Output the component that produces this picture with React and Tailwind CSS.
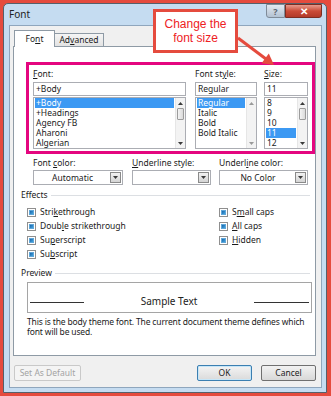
import React from 'react'

const U = ({ children }) => <span className="underline underline-offset-[1px] decoration-[0.5px]">{children}</span>

function Tri({ up, light }) {
  return (
    <svg width="5" height="3" viewBox="0 0 5 3">
      <polygon points={up ? '0,3 5,3 2.5,0' : '0,0 5,0 2.5,3'} fill={light ? '#9a9a9a' : '#3a3a3a'} />
    </svg>
  )
}

function Scroll({ thumb, disabled }) {
  return (
    <div className="w-[10px] flex flex-col bg-[#f3f3f3] border-l border-[#e6e6e6]">
      <div className="h-[10px] flex items-center justify-center">
        <Tri up light={disabled} />
      </div>
      <div className="flex-1">
        {thumb && <div className="h-[12px] mx-[1px] border border-[#9c9c9c] rounded-[1px] bg-gradient-to-r from-[#f4f4f4] to-[#dadada]" />}
      </div>
      <div className="h-[10px] flex items-center justify-center">
        <Tri light={disabled} />
      </div>
    </div>
  )
}

function ListBox({ items, selected, thumb, disabled, w }) {
  return (
    <div className={'flex h-[52px] border border-[#abadb3] bg-white ' + w}>
      <div className="flex-1 px-[1px] overflow-hidden">
        {items.map((it) => (
          <div key={it} className={'h-[10px] leading-[10px] pl-[1px] whitespace-nowrap ' + (it === selected ? 'bg-[#3c99f3] text-white' : '')}>
            {it}
          </div>
        ))}
      </div>
      <Scroll thumb={thumb} disabled={disabled} />
    </div>
  )
}

function Drop({ value, w }) {
  return (
    <div className={'flex h-[15px] border border-[#abadb3] bg-white p-[1px] ' + w}>
      <div className="flex-1 text-center leading-[11px]">{value}</div>
      <div className="w-[11px] border border-[#8a8a8a] bg-gradient-to-b from-[#f2f2f2] to-[#d4d4d4] flex items-center justify-center">
        <Tri />
      </div>
    </div>
  )
}

function Check({ children }) {
  return (
    <div className="h-[14px] flex items-center gap-[4px]">
      <div className="w-[9px] h-[9px] border border-[#8f8f8f] bg-white p-[1px]">
        <div className="w-full h-full border border-[#5ea6d9] bg-gradient-to-br from-[#1c63a8] to-[#43a6e0]" />
      </div>
      <span>{children}</span>
    </div>
  )
}

function Section({ title }) {
  return (
    <div className="h-[12px] flex items-center gap-[3px] pl-[7px] pr-[5px]">
      <span>{title}</span>
      <div className="flex-1 h-px bg-[#dcdfe3]" />
    </div>
  )
}

export default function App() {
  return (
    <div className="relative w-[331px] h-[396px] bg-[#e54b3e] pt-[3px] pl-[3px] pr-[4px] pb-[3px] text-[8.5px] text-[#1b1b1b] font-['Noto_Sans',sans-serif]">
      <div className="h-full border border-[#55606b] rounded-t-[5px] bg-[#c5dcf1] flex flex-col">
        {/* titel */}
        <div className="h-[21px] flex items-start justify-between">
          <span className="pl-[5px] pt-[3px] text-[10px] text-[#222]">Font</span>
          <div className="flex mr-[4px]">
            <div className="w-[19px] h-[14px] border border-[#7f8b98] rounded-bl-[3px] bg-gradient-to-b from-[#e2e9f1] to-[#b3c2d2] flex items-center justify-center text-[9px] font-bold text-[#5a6470] leading-none">?</div>
            <div className="w-[37px] h-[14px] border border-[#7d2d22] rounded-br-[3px] bg-gradient-to-b from-[#e79a8d] via-[#cb4b37] to-[#b23a28] flex items-center justify-center text-[10px] font-bold text-white leading-none">✕</div>
          </div>
        </div>

        {/* client */}
        <div className="flex-1 ml-[5px] mr-[4px] mb-[4px] border border-[#8fa6bd] bg-[#f0f0f0] flex flex-col pt-[4px] pl-[3px] pr-[5px]">
          {/* tabs */}
          <div className="flex items-end h-[16px] pl-[1px] relative z-10">
            <div className="w-[41px] h-[17px] -mb-px border border-b-0 border-[#8e9aa5] bg-white flex items-center justify-center">
              Fo<U>n</U>t
            </div>
            <div className="w-[49px] h-[13px] border border-l-0 border-b-0 border-[#8e9aa5] bg-gradient-to-b from-[#f5f5f5] to-[#e3e3e3] flex items-center justify-center">
              Ad<U>v</U>anced
            </div>
          </div>

          {/* panel */}
          <div className="h-[310px] border border-[#8e9aa5] bg-white flex flex-col">
            {/* roze kader */}
            <div className="mt-[15px] ml-[12px] h-[92px] border-[3px] border-[#e4067f] pt-[3px] px-[4px] flex gap-[9px]">
              <div className="w-[153px] flex flex-col">
                <div className="h-[12px] leading-[12px]"><U>F</U>ont:</div>
                <div className="mt-[2px] h-[14px] border border-[#abadb3] pl-[2px] leading-[12px]">+Body</div>
                <div className="mt-[1px]">
                  <ListBox w="w-[153px]" items={['+Body', '+Headings', 'Agency FB', 'Aharoni', 'Algerian']} selected="+Body" thumb />
                </div>
              </div>
              <div className="w-[62px] flex flex-col">
                <div className="h-[12px] leading-[12px]">Font st<U>y</U>le:</div>
                <div className="mt-[2px] h-[14px] border border-[#abadb3] pl-[2px] leading-[12px]">Regular</div>
                <div className="mt-[1px]">
                  <ListBox w="w-[62px]" items={['Regular', 'Italic', 'Bold', 'Bold Italic']} selected="Regular" disabled />
                </div>
              </div>
              <div className="w-[44px] ml-[-2px] flex flex-col">
                <div className="h-[12px] leading-[12px]"><U>S</U>ize:</div>
                <div className="mt-[2px] h-[14px] border border-[#abadb3] pl-[2px] leading-[12px]">11</div>
                <div className="mt-[1px]">
                  <ListBox w="w-[44px]" items={['8', '9', '10', '11', '12']} selected="11" thumb />
                </div>
              </div>
            </div>

            {/* kleur en onderstreping */}
            <div className="mt-[3px] pl-[19px] flex gap-[9px]">
              <div className="w-[90px]">
                <div className="h-[12px] leading-[12px]">Font <U>c</U>olor:</div>
                <div className="mt-[1px]"><Drop w="w-[90px]" value="Automatic" /></div>
              </div>
              <div className="w-[79px]">
                <div className="h-[12px] leading-[12px]"><U>U</U>nderline style:</div>
                <div className="mt-[1px]"><Drop w="w-[79px]" value="" /></div>
              </div>
              <div className="w-[89px] ml-[-1px]">
                <div className="h-[12px] leading-[12px]">Underl<U>i</U>ne color:</div>
                <div className="mt-[1px]"><Drop w="w-[89px]" value="No Color" /></div>
              </div>
            </div>

            {/* effecten */}
            <div className="mt-[4px]"><Section title="Effects" /></div>
            <div className="mt-[4px] pl-[13px] flex">
              <div className="w-[192px]">
                <Check>Stri<U>k</U>ethrough</Check>
                <Check>Doub<U>l</U>e strikethrough</Check>
                <Check>Su<U>p</U>erscript</Check>
                <Check>Su<U>b</U>script</Check>
              </div>
              <div>
                <Check>S<U>m</U>all caps</Check>
                <Check><U>A</U>ll caps</Check>
                <Check><U>H</U>idden</Check>
              </div>
            </div>

            {/* voorbeeld */}
            <div className="mt-[6px]"><Section title="Preview" /></div>
            <div className="mt-[3px] ml-[13px] w-[285px] h-[31px] border border-[#a5a5a5] flex items-end pb-[9px] px-[2px] gap-[2px]">
              <div className="w-[54px] h-px bg-[#333]" />
              <div className="flex-1 text-center text-[10px] leading-[12px] text-[#222] -mb-[4px]">Sample Text</div>
              <div className="w-[55px] h-px bg-[#333]" />
            </div>
            <div className="mt-[4px] pl-[13px] pr-[2px] leading-[10px] tracking-[-0.15px]">
              This is the body theme font. The current document theme defines which font will be used.
            </div>
          </div>

          {/* knoppen */}
          <div className="mt-[9px] pl-[1px] flex items-center">
            <div className="w-[67px] h-[16px] border border-[#c9c9c9] rounded-[2px] bg-[#f4f4f4] text-[#a3a3a3] flex items-center justify-center">Set As Default</div>
            <div className="flex-1" />
            <div className="w-[55px] h-[16px] border border-[#3c7fb1] rounded-[2px] p-[1px] bg-[#c6e6f8]">
              <div className="w-full h-full bg-gradient-to-b from-[#f2f2f2] to-[#dcdcdc] flex items-center justify-center">OK</div>
            </div>
            <div className="ml-[9px] w-[55px] h-[16px] border border-[#707070] rounded-[2px] bg-gradient-to-b from-[#f2f2f2] to-[#d8d8d8] flex items-center justify-center">Cancel</div>
          </div>
        </div>
      </div>

      {/* uitleg */}
      <div className="absolute left-[153px] top-[9px] w-[85px] h-[44px] border-[3px] border-[#e54b3e] bg-white flex flex-col items-center justify-center text-[12px] leading-[14px] text-[#ee2124] font-['Liberation_Sans',sans-serif]">
        <span>Change the</span>
        <span>font size</span>
      </div>
      <svg className="absolute left-[234px] top-[32px]" width="46" height="38" viewBox="0 0 46 38">
        <line x1="4" y1="6" x2="32" y2="27" stroke="#e54b3e" strokeWidth="3" />
        <polygon points="40,33 27.6,31.2 34.8,21.6" fill="#e54b3e" />
      </svg>
    </div>
  )
}
